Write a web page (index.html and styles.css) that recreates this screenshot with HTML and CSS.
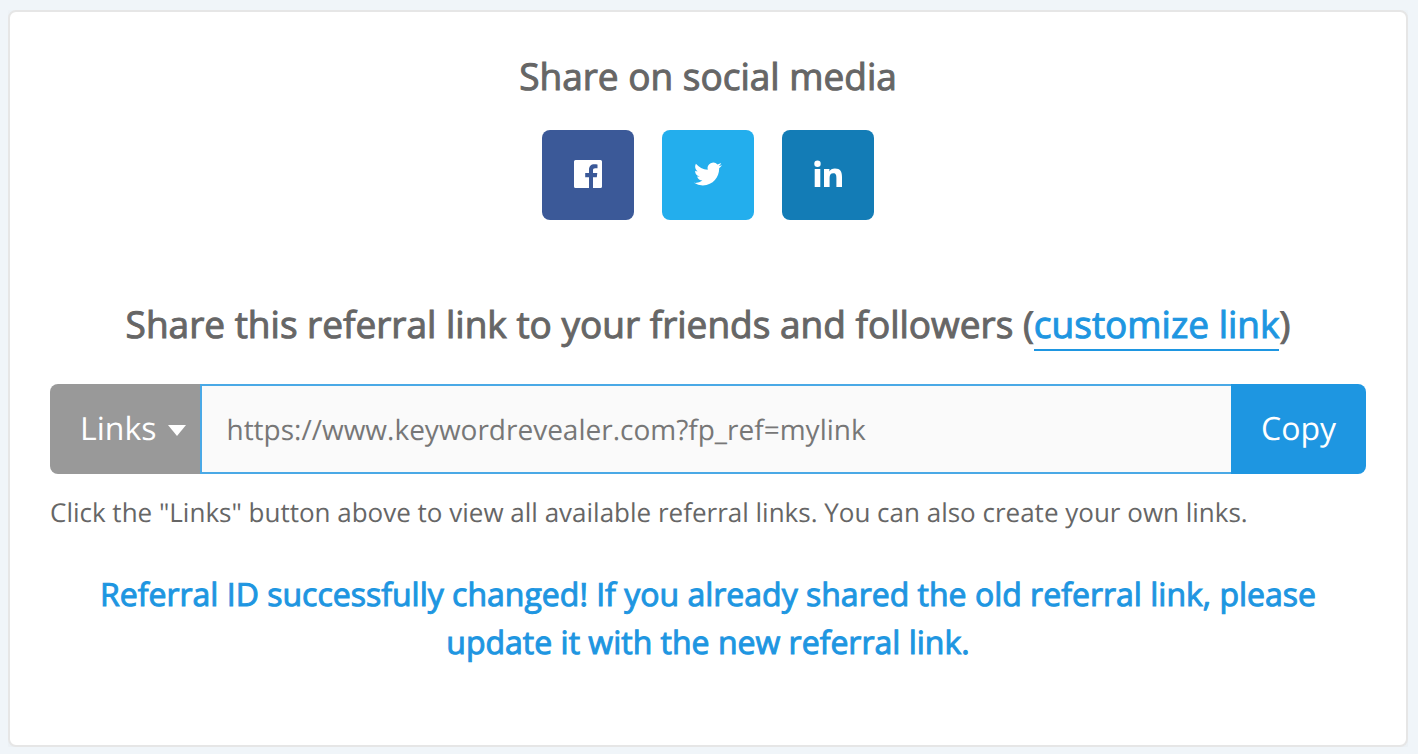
FILE: index.html
```html
<!DOCTYPE html>
<html lang="en">
<head>
<meta charset="utf-8">
<meta name="viewport" content="width=device-width, initial-scale=1">
<title>Share your referral link</title>
<link rel="stylesheet" href="styles.css">
</head>
<body>
<main class="card">
  <h2 class="heading">Share on social media</h2>
  <div class="social">
    <a class="social-button facebook" href="#facebook" aria-label="Share on Facebook">
      <svg class="icon" viewBox="0 0 28 28" aria-hidden="true"><path d="M1.5 0H26.500Q28 0 28 1.500V26.500Q28 28 26.500 28H19V17.200H22.800L23.300 13H19V10.300C19 9 19.500 8.200 21.200 8.200H23.500V4.400C22.900 4.300 21.700 4.200 20.300 4.200C17 4.200 15 6.200 15 9.700V13H11.200V17.200H15V28H1.500Q0 28 0 26.500V1.500Q0 0 1.500 0Z"/></svg>
    </a>
    <a class="social-button twitter" href="#twitter" aria-label="Share on Twitter">
      <svg class="icon" viewBox="0 0 24 24" aria-hidden="true"><path d="M23.953 4.570a10 10 0 01-2.825.775 4.958 4.958 0 002.163-2.723c-.951.555-2.005.959-3.127 1.184a4.920 4.920 0 00-8.384 4.482C7.690 8.095 4.067 6.130 1.640 3.162a4.822 4.822 0 00-.666 2.475c0 1.710.870 3.213 2.188 4.096a4.904 4.904 0 01-2.228-.616v.060a4.923 4.923 0 003.946 4.827 4.996 4.996 0 01-2.212.085 4.936 4.936 0 004.604 3.417 9.867 9.867 0 01-6.102 2.105c-.39 0-.779-.023-1.170-.067a13.995 13.995 0 007.557 2.209c9.053 0 13.998-7.496 13.998-13.985 0-.21 0-.42-.015-.63A9.935 9.935 0 0024 4.590z"/></svg>
    </a>
    <a class="social-button linkedin" href="#linkedin" aria-label="Share on LinkedIn">
      <svg class="icon" viewBox="0 0 28 28" aria-hidden="true"><circle cx="3.500" cy="3.800" r="3.200"/><path d="M.7 9H6.300V27H.7ZM10 9H15.400V11.500C16.200 9.900 18.200 8.600 20.900 8.600C26.500 8.600 28 12 28 17V27H22.400V18C22.400 15.400 22 13.300 19.300 13.300C16.500 13.300 15.600 15.300 15.600 18V27H10Z"/></svg>
    </a>
  </div>
  <h2 class="heading">Share this referral link to your friends and followers (<a class="customize" href="#customize">customize link</a>)</h2>
  <div class="link-bar">
    <button class="bar-button links" type="button">Links<svg class="caret" viewBox="0 0 18 12" aria-hidden="true"><path d="M0 1H18L9 12Z"/></svg></button>
    <input class="url" type="text" aria-label="Referral link" value="https://www.keywordrevealer.com?fp_ref=mylink" readonly>
    <button class="bar-button copy" type="button">Copy</button>
  </div>
  <p class="hint">Click the "Links" button above to view all available referral links. You can also create your own links.</p>
  <p class="message" role="status">Referral ID successfully changed! If you already shared the old referral link, please update it with the new referral link.</p>
</main>
</body>
</html>
```
FILE: styles.css
```css
* {
  box-sizing: border-box;
}

body {
  margin: 10px 10px 6px 8px;
  background: #f0f5f9;
  color: #666;
  font-family: "Open Sans", sans-serif;
  text-rendering: geometricPrecision;
}

.card {
  padding: 38px 40px 78px;
  border: 2px solid #e6e6e6;
  border-radius: 8px;
  background: #fff;
  box-shadow: 0 2px 16px rgba(0, 0, 0, 0.05);
}

.heading {
  margin: 0;
  font-size: 37px;
  font-weight: 400;
  line-height: 52px;
  text-align: center;
  -webkit-text-stroke: 1px currentColor;
}

.social {
  display: flex;
  justify-content: center;
  gap: 28px;
  margin: 28px 0 78px;
}

.social-button {
  display: flex;
  align-items: center;
  justify-content: center;
  width: 92px;
  height: 90px;
  padding-bottom: 2px;
  border-radius: 8px;
}

.facebook {
  background: #3b5998;
}

.twitter {
  background: #23aeed;
}

.linkedin {
  background: #137cb6;
}

.icon {
  width: 28px;
  height: 28px;
  fill: #fff;
}

.customize {
  border-bottom: 2px solid #1e96e1;
  color: #1e96e1;
  text-decoration: none;
}

.link-bar {
  display: flex;
  height: 90px;
  margin-top: 34px;
}

.bar-button {
  display: flex;
  align-items: center;
  border: 0;
  color: #fff;
  font: 32px "Open Sans", sans-serif;
  text-rendering: inherit;
}

.links {
  gap: 12px;
  padding: 0 14px 2px 30px;
  border-radius: 8px 0 0 8px;
  background: #999;
}

.caret {
  width: 18px;
  height: 12px;
  margin-top: 4px;
  fill: #fff;
}

.copy {
  padding: 0 30px 2px;
  border-radius: 0 8px 8px 0;
  background: #1e96e1;
}

.url {
  flex: 1;
  min-width: 0;
  padding: 2px 24px 0;
  border: 2px solid #4aa9e6;
  border-right: 0;
  border-radius: 0;
  background: #fafafa;
  color: #777;
  font: 28px "Open Sans", sans-serif;
  text-rendering: inherit;
}

.hint {
  margin: 20px 0 0;
  font-size: 26px;
  line-height: 37px;
}

.message {
  margin: 40px 0 0;
  color: #1e96e1;
  font-size: 32px;
  line-height: 48px;
  text-align: center;
  -webkit-text-stroke: 1px currentColor;
}
```
